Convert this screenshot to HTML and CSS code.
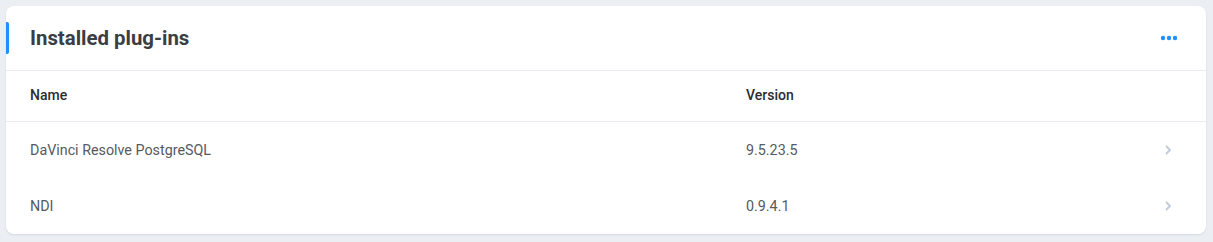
FILE: index.html
```html
<!DOCTYPE html>
<html lang="en">
  <head>
    <meta charset="UTF-8" />
    <title>Installed plug-ins</title>
    <link rel="stylesheet" href="styles.css">
  </head>
  <body>
    <div class="card">
      <div class="card-header">
        <h2 class="card-title">Installed plug-ins</h2>
        <button class="more-btn" aria-label="More">
          <svg width="18" height="6" viewBox="0 0 18 6"><circle cx="3" cy="3" r="2.2" fill="#1e90ff"/><circle cx="9" cy="3" r="2.2" fill="#1e90ff"/><circle cx="15" cy="3" r="2.2" fill="#1e90ff"/></svg>
        </button>
      </div>
      <div class="table">
        <div class="row head">
          <div class="col-name">Name</div>
          <div class="col-version">Version</div>
          <div class="col-arrow"></div>
        </div>
        <div class="row">
          <div class="col-name">DaVinci Resolve PostgreSQL</div>
          <div class="col-version">9.5.23.5</div>
          <div class="col-arrow"><svg width="8" height="12" viewBox="0 0 8 12"><path d="M2 2l4 4-4 4" fill="none" stroke="#bfcbdb" stroke-width="1.8"/></svg></div>
        </div>
        <div class="row">
          <div class="col-name">NDI</div>
          <div class="col-version">0.9.4.1</div>
          <div class="col-arrow"><svg width="8" height="12" viewBox="0 0 8 12"><path d="M2 2l4 4-4 4" fill="none" stroke="#bfcbdb" stroke-width="1.8"/></svg></div>
        </div>
      </div>
    </div>
  </body>
</html>
```
FILE: styles.css
```css
body {
  margin: 0;
  padding: 6px 7px 8px 6px;
  background-color: #ebeff4;
  font-family: Roboto, "Liberation Sans", sans-serif;
}

.card {
  background-color: #fff;
  border-radius: 8px;
  box-shadow: 0 1px 2px rgba(40, 60, 90, 0.12);
  overflow: hidden;
}

.card-header {
  position: relative;
  display: flex;
  align-items: center;
  justify-content: space-between;
  height: 64px;
  padding: 0 28px 0 24px;
  border-bottom: 1px solid #e8ecf1;
}

.card-header::before {
  content: "";
  position: absolute;
  left: 0;
  top: 16px;
  width: 3px;
  height: 32px;
  background-color: #1e90ff;
  border-radius: 0 2px 2px 0;
}

.card-title {
  margin: 0;
  font-size: 20.4px;
  font-weight: 700;
  color: #3a3d42;
}

.more-btn {
  border: 0;
  background: none;
  padding: 0;
  display: flex;
  cursor: pointer;
}

.row {
  display: flex;
  align-items: center;
  height: 56px;
  padding: 0 34px 0 24px;
  font-size: 14.3px;
  color: #555a61;
}

.row.head {
  height: 51px;
  padding-bottom: 2px;
  box-sizing: border-box;
  font-weight: 500;
  font-size: 14px;
  color: #2a2d31;
  border-bottom: 1px solid #e8ecf1;
}

.col-name {
  width: 716px;
}

.col-version {
  flex: 1;
}

.col-arrow {
  width: 8px;
  display: flex;
}
```
